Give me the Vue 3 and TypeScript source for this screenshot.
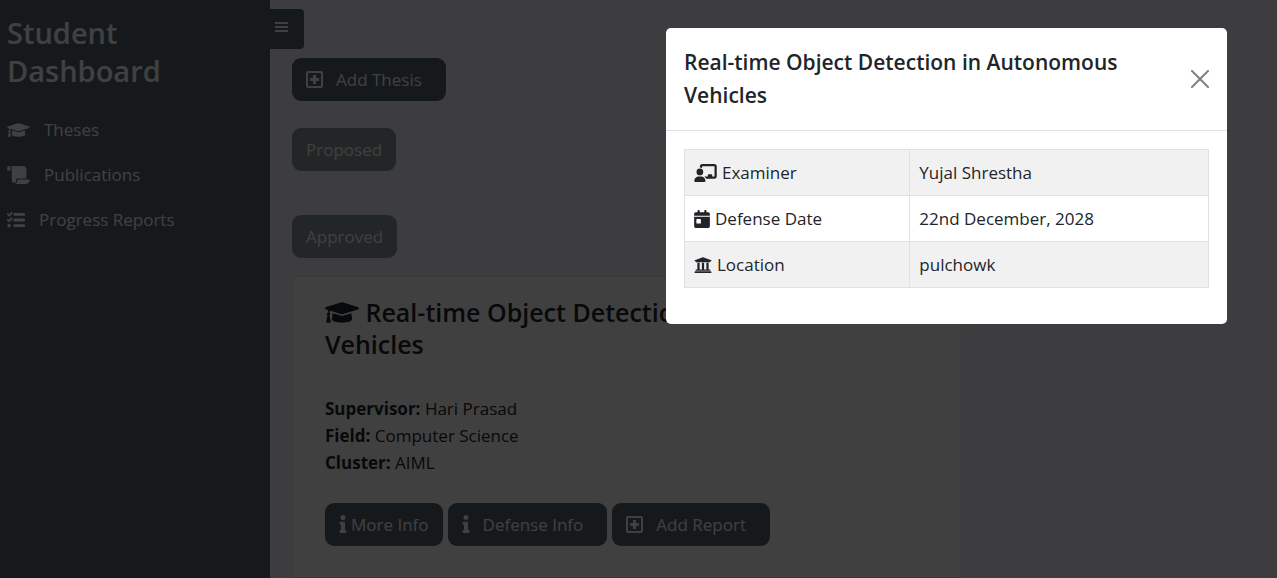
<script setup lang="ts">
import { ref } from 'vue'

interface Shape {
  box: string
  d: string
}

const icons: Record<string, Shape> = {
  cap: {
    box: '0 0 640 512',
    d: 'M622.34 153.2L343.4 67.5c-15.2-4.67-31.6-4.67-46.79 0L17.66 153.2c-23.54 7.23-23.54 38.36 0 45.59l48.63 14.94c-10.67 13.19-17.23 29.28-17.88 46.9C38.78 266.15 32 276.11 32 288c0 10.78 5.68 19.85 13.86 25.65L20.33 428.53C18.11 438.52 25.71 448 35.94 448h56.11c10.24 0 17.84-9.48 15.62-19.47L82.14 313.65C90.32 307.85 96 298.78 96 288c0-11.57-6.47-21.25-15.66-26.87.76-15.02 8.44-28.3 20.69-36.72L296.6 284.5c9.06 2.78 26.44 6.25 46.79 0l278.95-85.7c23.55-7.24 23.55-38.36 0-45.6zM352.79 315.09c-28.53 8.76-52.84 3.92-65.59 0l-145.02-44.55L128 384c0 35.35 85.96 64 192 64s192-28.65 192-64l-14.18-113.47-145.03 44.56z',
  },
  scroll: {
    box: '0 0 640 512',
    d: 'M48 0C21.53 0 0 21.53 0 48v64c0 8.84 7.16 16 16 16h80V48C96 21.53 74.47 0 48 0zm208 412.57V352h288V96c0-52.94-43.06-96-96-96H111.59C121.74 13.41 128 29.92 128 48v368c0 38.87 34.65 69.65 74.75 63.12C234.22 474 256 444.46 256 412.57zM288 384v32c0 52.93-43.06 96-96 96h336c61.86 0 112-50.14 112-112 0-8.84-7.16-16-16-16H288z',
  },
  tasks: {
    box: '0 0 512 512',
    d: 'M152 38a28 28 0 0 0-40-2L61 92 42 73a26 26 0 0 0-37 37l38 38a27 27 0 0 0 38-1l72-72a28 28 0 0 0-1-37zM152 198a28 28 0 0 0-40-2L61 252 42 233a26 26 0 0 0-37 37l38 38a27 27 0 0 0 38-1l72-72a28 28 0 0 0-1-37zM60 366a50 50 0 1 0 0 100 50 50 0 1 0 0-100zM208 56h280a24 24 0 0 1 24 24v32a24 24 0 0 1-24 24H208a24 24 0 0 1-24-24V80a24 24 0 0 1 24-24zM208 216h280a24 24 0 0 1 24 24v32a24 24 0 0 1-24 24H208a24 24 0 0 1-24-24v-32a24 24 0 0 1 24-24zM208 376h280a24 24 0 0 1 24 24v32a24 24 0 0 1-24 24H208a24 24 0 0 1-24-24v-32a24 24 0 0 1 24-24z',
  },
  info: {
    box: '0 0 192 512',
    d: 'M20 424.229h20V279.771H20c-11.046 0-20-8.954-20-20V212c0-11.046 8.954-20 20-20h112c11.046 0 20 8.954 20 20v212.229h20c11.046 0 20 8.954 20 20V492c0 11.046-8.954 20-20 20H20c-11.046 0-20-8.954-20-20v-47.771c0-11.046 8.954-20 20-20zM96 0C56.235 0 24 32.235 24 72s32.235 72 72 72 72-32.235 72-72S135.764 0 96 0z',
  },
  examiner: {
    box: '0 0 640 512',
    d: 'M160 64c0-35.3 28.7-64 64-64H576c35.3 0 64 28.7 64 64V352c0 35.3-28.7 64-64 64H336.8c-11.8-25.5-29.9-47.5-52.4-64H384V320c0-17.7 14.3-32 32-32h64c17.7 0 32 14.3 32 32v32h64V64H224v49.1C205.2 102.2 183.300 96 160 96V64zm0 64a96 96 0 1 1 0 192 96 96 0 1 1 0-192zM133.300 352h53.300C260.300 352 320 411.700 320 485.300c0 14.700-11.900 26.700-26.700 26.700H26.700C11.900 512 0 500.100 0 485.300C0 411.700 59.700 352 133.300 352z',
  },
  calendar: {
    box: '0 0 448 512',
    d: 'M128 0c17.700 0 32 14.300 32 32V64H288V32c0-17.700 14.300-32 32-32s32 14.300 32 32V64h48c26.500 0 48 21.500 48 48v48H0V112C0 85.500 21.500 64 48 64H96V32c0-17.700 14.300-32 32-32zM0 192H448V464c0 26.500-21.500 48-48 48H48c-26.500 0-48-21.500-48-48V192zm80 64c-8.800 0-16 7.200-16 16v96c0 8.800 7.200 16 16 16h96c8.800 0 16-7.200 16-16V272c0-8.800-7.200-16-16-16H80z',
  },
  bank: {
    box: '0 0 512 512',
    d: 'M496 128v16a8 8 0 0 1-8 8h-24v12c0 6.627-5.373 12-12 12H60c-6.627 0-12-5.373-12-12v-12H24a8 8 0 0 1-8-8v-16a8 8 0 0 1 4.941-7.392l232-88a7.996 7.996 0 0 1 6.118 0l232 88A8 8 0 0 1 496 128zm-24 304H40c-13.255 0-24 10.745-24 24v16a8 8 0 0 0 8 8h464a8 8 0 0 0 8-8v-16c0-13.255-10.745-24-24-24zM96 192v192H60c-6.627 0-12 5.373-12 12v20h416v-20c0-6.627-5.373-12-12-12h-36V192h-64v192h-64V192h-64v192h-64V192H96z',
  },
}

const links = [
  { label: 'Theses', icon: 'cap', kind: 'wide' },
  { label: 'Publications', icon: 'scroll', kind: 'wide' },
  { label: 'Progress Reports', icon: 'tasks', kind: 'square' },
]

const facts = [
  { name: 'Supervisor:', value: 'Hari Prasad' },
  { name: 'Field:', value: 'Computer Science' },
  { name: 'Cluster:', value: 'AIML' },
]

const defense = [
  { label: 'Examiner', value: 'Yujal Shrestha', icon: 'examiner', kind: 'wide' },
  { label: 'Defense Date', value: '22nd December, 2028', icon: 'calendar', kind: 'narrow' },
  { label: 'Location', value: 'pulchowk', icon: 'bank', kind: 'square' },
]

const title = 'Real-time Object Detection in Autonomous Vehicles'
const modalOpen = ref(true)
</script>

<template>
  <div class="page">
    <aside class="sidebar">
      <h2 class="brand">Student Dashboard</h2>
      <nav class="nav">
        <a v-for="link in links" :key="link.label" href="#" class="nav-link">
          <svg class="icon" :class="link.kind" :viewBox="icons[link.icon].box" aria-hidden="true">
            <path :d="icons[link.icon].d" />
          </svg>
          <span>{{ link.label }}</span>
        </a>
      </nav>
    </aside>

    <main class="content">
      <button type="button" class="toggle" aria-label="Toggle sidebar">
        <svg class="bars" viewBox="0 0 13 10" aria-hidden="true">
          <path d="M0 0h13v2H0zM0 4h13v2H0zM0 8h13v2H0z" />
        </svg>
      </button>

      <div class="stack">
        <button type="button" class="btn spaced">
          <svg class="icon plus" viewBox="0 0 17 17" aria-hidden="true">
            <rect x="1" y="1" width="15" height="15" rx="1" />
            <path d="M8.500 4v9M4 8.500h9" />
          </svg>
          <span>Add Thesis</span>
        </button>
        <button type="button" class="btn" disabled>Proposed</button>
        <button type="button" class="btn" disabled>Approved</button>
      </div>

      <article class="card">
        <h3 class="card-title">
          <svg class="icon title-cap" :viewBox="icons.cap.box" aria-hidden="true">
            <path :d="icons.cap.d" />
          </svg>
          {{ title }}
        </h3>
        <p v-for="fact in facts" :key="fact.name" class="fact">
          <strong>{{ fact.name }}</strong> {{ fact.value }}
        </p>
        <div class="actions">
          <button type="button" class="btn">
            <svg class="icon slim" :viewBox="icons.info.box" aria-hidden="true">
              <path :d="icons.info.d" />
            </svg>
            <span>More Info</span>
          </button>
          <button type="button" class="btn spaced" @click="modalOpen = true">
            <svg class="icon slim" :viewBox="icons.info.box" aria-hidden="true">
              <path :d="icons.info.d" />
            </svg>
            <span>Defense Info</span>
          </button>
          <button type="button" class="btn spaced">
            <svg class="icon plus" viewBox="0 0 17 17" aria-hidden="true">
              <rect x="1" y="1" width="15" height="15" rx="1" />
              <path d="M8.500 4v9M4 8.500h9" />
            </svg>
            <span>Add Report</span>
          </button>
        </div>
      </article>
    </main>

    <div v-if="modalOpen" class="backdrop">
      <section class="modal" role="dialog" aria-modal="true" aria-labelledby="modal-title">
        <header class="modal-header">
          <h5 id="modal-title" class="modal-title">{{ title }}</h5>
          <button type="button" class="close" aria-label="Close" @click="modalOpen = false">
            <svg viewBox="0 0 18 18" aria-hidden="true">
              <path d="M1 1l16 16M17 1L1 17" />
            </svg>
          </button>
        </header>
        <div class="modal-body">
          <table class="table">
            <tbody>
              <tr v-for="row in defense" :key="row.label">
                <th scope="row">
                  <span class="cell">
                    <svg class="icon" :class="row.kind" :viewBox="icons[row.icon].box" aria-hidden="true">
                      <path :d="icons[row.icon].d" fill-rule="evenodd" />
                    </svg>
                    <span>{{ row.label }}</span>
                  </span>
                </th>
                <td>{{ row.value }}</td>
              </tr>
            </tbody>
          </table>
        </div>
      </section>
    </div>
  </div>
</template>

<style>
body {
  margin: 0;
}
</style>

<style scoped>
.page {
  display: grid;
  grid-template-columns: 270px 1fr;
  height: 100vh;
  overflow: hidden;
  background: #f1f4fa;
  color: #212529;
  font-family: "Open Sans", "Noto Sans", sans-serif;
  font-size: 17px;
  line-height: 27px;
}

.page * {
  box-sizing: border-box;
}

.icon {
  flex: none;
  height: 18px;
  fill: currentColor;
}

.wide {
  width: 23px;
}

.square {
  width: 18px;
}

.narrow {
  width: 16px;
}

.slim {
  width: 8px;
}

.plus {
  width: 17px;
  height: 17px;
  fill: none;
  stroke: currentColor;
  stroke-width: 2;
}

.plus path {
  stroke-width: 3;
}

.sidebar {
  padding: 14px 7px;
  background: #54646c;
  color: #fff;
}

.brand {
  width: 180px;
  margin: 0 0 26px;
  font-size: 29px;
  font-weight: 600;
  line-height: 38px;
}

.nav {
  display: flex;
  flex-direction: column;
  gap: 18px;
}

.nav-link {
  display: flex;
  align-items: center;
  gap: 14px;
  color: inherit;
  text-decoration: none;
}

.content {
  display: flex;
  flex-direction: column;
  align-items: flex-start;
  min-width: 0;
  padding-top: 9px;
}

.toggle {
  flex: none;
  display: flex;
  width: 34px;
  height: 40px;
  padding: 13px 5px;
  border: 0;
  border-radius: 0 4px 4px 0;
  background: #54646c;
  color: #fff;
}

.bars {
  width: 13px;
  height: 10px;
  fill: currentColor;
}

.stack {
  display: flex;
  flex-direction: column;
  align-items: flex-start;
  padding: 9px 22px 0;
}

.stack .btn:nth-child(2) {
  margin: 27px 0 44px;
}

.btn {
  display: inline-flex;
  align-items: center;
  gap: 4px;
  height: 43px;
  padding: 0 14px 1px;
  border: 0;
  border-radius: 9px;
  background: #54646c;
  color: #fff;
  font: inherit;
  white-space: nowrap;
}

.btn:disabled {
  opacity: 0.65;
}

.spaced {
  gap: 13px;
  padding-right: 24px;
}

.card {
  flex: 1 0 auto;
  width: 66.5%;
  margin: 18px 0 0 22px;
  padding: 19px 32px;
  border: 1px solid #e0e2e6;
  border-radius: 6px 6px 0 0;
  background: #fff;
}

.card-title {
  margin: 0 0 35px;
  font-size: 25px;
  font-weight: 600;
  line-height: 32px;
}

.title-cap {
  width: 34px;
  height: 27px;
  vertical-align: -4px;
}

.fact {
  margin: 0;
}

.actions {
  display: flex;
  gap: 5px;
  padding-top: 27px;
}

.backdrop {
  position: fixed;
  inset: 0;
  display: flex;
  align-items: flex-start;
  justify-content: flex-end;
  padding: 28px 50px;
  background: rgba(0, 0, 0, 0.75);
}

.modal {
  width: 100%;
  max-width: 561px;
  border-radius: 5px;
  background: #fff;
}

.modal-header {
  display: flex;
  align-items: center;
  justify-content: space-between;
  gap: 18px;
  padding: 18px;
  border-bottom: 1px solid #dee2e6;
}

.modal-title {
  margin: 0;
  font-size: 21px;
  font-weight: 600;
  line-height: 33px;
}

.close {
  flex: none;
  display: flex;
  padding: 0;
  border: 0;
  background: none;
  color: #808080;
}

.close svg {
  width: 18px;
  height: 18px;
  fill: none;
  stroke: currentColor;
  stroke-width: 2;
  stroke-linecap: round;
}

.modal-body {
  padding: 18px 18px 36px;
}

.table {
  width: 100%;
  border-collapse: collapse;
}

.table th,
.table td {
  height: 46px;
  padding: 9px;
  border: 1px solid #dee2e6;
  font-weight: 400;
  text-align: left;
}

.table th {
  width: 43%;
}

.table tr:nth-child(odd) {
  background: #f1f1f1;
}

.cell {
  display: flex;
  align-items: center;
  gap: 5px;
}
</style>
